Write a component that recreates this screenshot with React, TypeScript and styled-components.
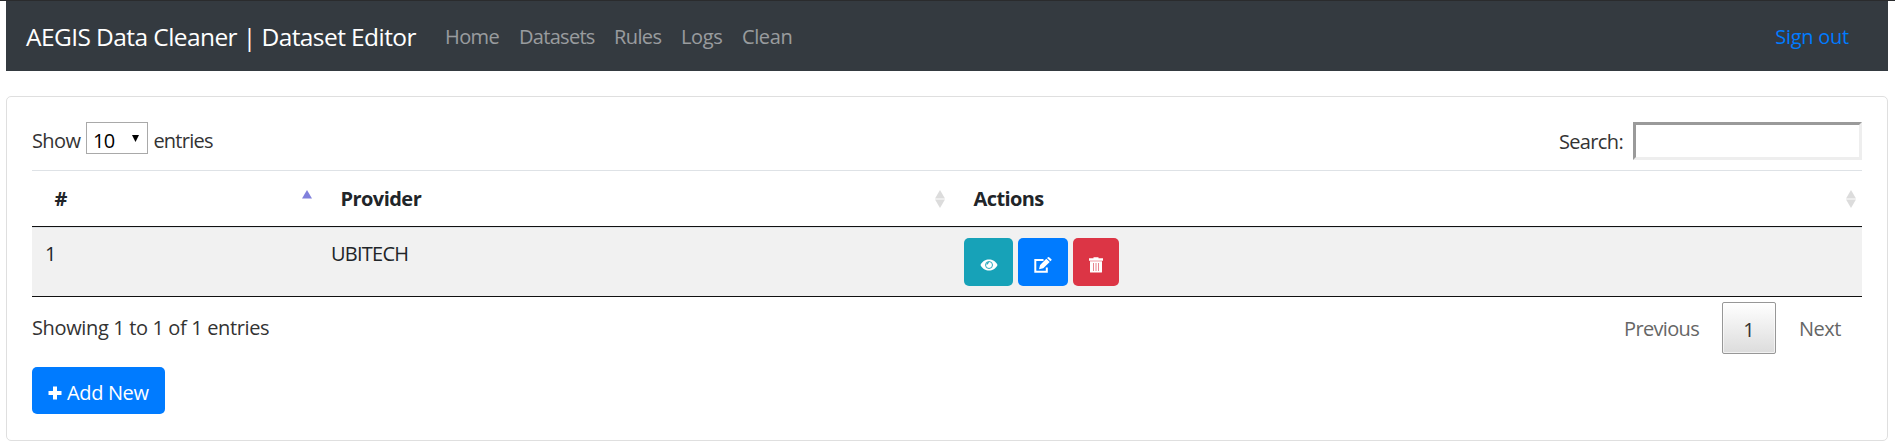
import React from "react";
import styled, { createGlobalStyle } from "styled-components";

const Global = createGlobalStyle`
  *, *::before, *::after { box-sizing: border-box; }
  body {
    margin: 0;
    background: #fff;
    color: #212529;
    font: 400 20px/30px "Open Sans", "Noto Sans", sans-serif;
    overflow: hidden;
  }
`;

const Page = styled.div`
  height: 446px;
  border-top: 1px solid #2a2b2d;
  padding: 0 7px 0 6px;
`;

const Text = styled.span<{ $track?: number }>`
  white-space: nowrap;
  letter-spacing: ${(p) => p.$track ?? 0}px;
`;

const Navbar = styled.nav`
  display: flex;
  align-items: center;
  height: 70px;
  padding: 2px 39px 0 20px;
  background: #343a40;
`;

const Brand = styled.a`
  width: 419px;
  font-size: 24.5px;
  line-height: 38px;
  color: #fff;
`;

const NavLinks = styled.div`
  display: flex;
  flex: 1;
`;

const NavLink = styled.a<{ $w: number }>`
  width: ${(p) => p.$w}px;
  color: rgba(255, 255, 255, 0.5);
`;

const SignOut = styled.a`
  color: #007bff;
`;

const Card = styled.main`
  height: 345px;
  margin-top: 25px;
  padding: 25px;
  border: 1px solid #dfdfdf;
  border-radius: 5px;
`;

const Controls = styled.div`
  display: flex;
  justify-content: space-between;
  align-items: flex-start;
  height: 48px;
  color: #333;
`;

const LengthLabel = styled.label`
  display: flex;
  gap: 5.5px;
  line-height: 37px;
`;

const SelectBox = styled.span`
  display: flex;
  align-items: center;
  justify-content: space-between;
  width: 62px;
  height: 32px;
  padding: 4px 8px 0 6px;
  border: 1px solid #a9a9a9;
  color: #000;
`;

const Arrow = styled.svg`
  margin-bottom: 4px;
`;

const SearchLabel = styled.label`
  display: flex;
  gap: 10px;
  line-height: 40px;
`;

const SearchInput = styled.input`
  width: 229px;
  height: 38px;
  border: 3px solid;
  border-color: #9a9a9a #eee #eee #9a9a9a;
  background: #fff;
  font: inherit;
  outline: none;
`;

const Table = styled.div`
  border-bottom: 1px solid #111;
`;

const HeadRow = styled.div`
  display: grid;
  grid-template-columns: 286px 633px 1fr;
  height: 57px;
  border-top: 1px solid #dee2e6;
  border-bottom: 1px solid #111;
`;

const HeadCell = styled.div`
  display: flex;
  align-items: center;
  justify-content: space-between;
  padding: 0 6.5px 0 22.5px;
  font-weight: 700;
`;

const BodyRow = styled.div`
  display: grid;
  grid-template-columns: 286px 633px 1fr;
  height: 69px;
  border-top: 1px solid #dee2e6;
  background: #f1f1f1;
`;

const Cell = styled.div`
  display: flex;
  align-items: flex-start;
  gap: 5px;
  padding: 11px 13px 0;
`;

const ActionButton = styled.button<{ $bg: string; $w: number }>`
  display: flex;
  align-items: center;
  justify-content: center;
  width: ${(p) => p.$w}px;
  height: 48px;
  margin: -1px 0 0;
  padding: 5px 0 0;
  border: 0;
  border-radius: 5px;
  background: ${(p) => p.$bg};
  color: #fff;
`;

const Footer = styled.div`
  display: flex;
  justify-content: space-between;
  height: 70px;
  padding-top: 5px;
  color: #333;
`;

const Info = styled.div`
  padding-top: 11px;
`;

const Pager = styled.div`
  display: flex;
  height: 52px;
  line-height: 53px;
  color: #666;
`;

const PageLink = styled.a<{ $w: number }>`
  width: ${(p) => p.$w}px;
`;

const CurrentPage = styled.a`
  width: 54px;
  margin-right: 23px;
  border: 1px solid #979797;
  border-radius: 2px;
  background: linear-gradient(#fff, #dcdcdc);
  box-shadow: inset 0 0 0 1px rgba(255, 255, 255, 0.6);
  color: #333;
  text-align: center;
`;

const AddButton = styled.button`
  display: flex;
  align-items: center;
  gap: 5px;
  width: 133px;
  height: 47px;
  padding: 4px 0 0 16px;
  border: 0;
  border-radius: 5px;
  background: #007bff;
  color: #fff;
  font: inherit;
`;

const SortIcon = ({ active }: { active?: boolean }) => (
  <svg width="10" height="18" viewBox="0 0 10 18">
    <path d="M5 0L10 8.500H0z" fill={active ? "#8080dc" : "#dcdcdc"} />
    {!active && <path d="M5 18L10 9.500H0z" fill="#dcdcdc" />}
  </svg>
);

const EyeIcon = () => (
  <svg width="18" height="14" viewBox="0 0 18 14" fill="none">
    <path d="M.5 7C2.500 3 5.500 1.500 9 1.500S15.500 3 17.500 7C15.500 11 12.500 12.500 9 12.500S2.500 11 .5 7z" fill="#fff" />
    <circle cx="9" cy="7" r="3.500" stroke="#17a2b8" strokeWidth="0.900" />
    <path d="M7 6.500a1.800 1.800 0 0 1 1.800-1.800" stroke="#17a2b8" strokeWidth="1.300" />
  </svg>
);

const EditIcon = () => (
  <svg width="18" height="16" viewBox="0 0 18 16" fill="none">
    <path d="M9.500 3.100H1.300v11.600h11.500V10.500" stroke="#fff" strokeWidth="2" />
    <path d="M5 12.300l1.100-4.400L12.300 1.700l3.400 3.200L9.300 11.300z M13 1.100L14.100.2q.5-.4 1 0L17.400 2.300q.5.500 0 1L16.400 4.300z" fill="#fff" />
  </svg>
);

const TrashIcon = () => (
  <svg width="14" height="16" viewBox="0 0 14 16" fill="none">
    <path d="M0 1.300h4.500V.3h5v1H14V3.700H0z M1 4.300h12V15q0 .6-.6.600H1.600Q1 15.600 1 15z" fill="#fff" />
    <path d="M4.500 6v8M7 6v8M9.500 6v8" stroke="#e8848d" />
  </svg>
);

const PlusIcon = () => (
  <svg width="14" height="14" viewBox="0 0 14 14">
    <path d="M5 .5h4V5h4.500v4H9v4.500H5V9H.5V5H5z" fill="#fff" />
  </svg>
);

const LINKS = [
  { label: "Home", width: 74, track: -0.6 },
  { label: "Datasets", width: 95, track: -0.7 },
  { label: "Rules", width: 67, track: -0.6 },
  { label: "Logs", width: 61, track: -0.4 },
  { label: "Clean", width: 60, track: -0.4 },
];

export default function App() {
  return (
    <>
      <Global />
      <Page>
        <Navbar>
          <Brand><Text $track={-0.58}>AEGIS Data Cleaner | Dataset Editor</Text></Brand>
          <NavLinks>
            {LINKS.map((link) => (
              <NavLink key={link.label} $w={link.width}>
                <Text $track={link.track}>{link.label}</Text>
              </NavLink>
            ))}
          </NavLinks>
          <SignOut><Text $track={-0.25}>Sign out</Text></SignOut>
        </Navbar>
        <Card>
          <Controls>
            <LengthLabel>
              <Text $track={-0.6}>Show</Text>
              <SelectBox>
                <Text $track={-0.6}>10</Text>
                <Arrow width="7" height="7" viewBox="0 0 7 7"><path d="M0 0h7L3.500 7z" /></Arrow>
              </SelectBox>
              <Text $track={-0.75}>entries</Text>
            </LengthLabel>
            <SearchLabel>
              <Text $track={-0.65}>Search:</Text>
              <SearchInput />
            </SearchLabel>
          </Controls>
          <Table>
            <HeadRow>
              <HeadCell><Text>#</Text><SortIcon active /></HeadCell>
              <HeadCell><Text $track={-0.55}>Provider</Text><SortIcon /></HeadCell>
              <HeadCell><Text $track={-0.6}>Actions</Text><SortIcon /></HeadCell>
            </HeadRow>
            <BodyRow>
              <Cell><Text>1</Text></Cell>
              <Cell><Text $track={-0.75}>UBITECH</Text></Cell>
              <Cell>
                <ActionButton $bg="#17a2b8" $w={49} aria-label="View"><EyeIcon /></ActionButton>
                <ActionButton $bg="#007bff" $w={50} aria-label="Edit"><EditIcon /></ActionButton>
                <ActionButton $bg="#dc3545" $w={46} aria-label="Delete"><TrashIcon /></ActionButton>
              </Cell>
            </BodyRow>
          </Table>
          <Footer>
            <Info><Text $track={-0.36}>Showing 1 to 1 of 1 entries</Text></Info>
            <Pager>
              <PageLink $w={98}><Text $track={-0.65}>Previous</Text></PageLink>
              <CurrentPage><Text>1</Text></CurrentPage>
              <PageLink $w={63}><Text $track={-0.5}>Next</Text></PageLink>
            </Pager>
          </Footer>
          <AddButton><PlusIcon /><Text $track={-0.35}>Add New</Text></AddButton>
        </Card>
      </Page>
    </>
  );
}
